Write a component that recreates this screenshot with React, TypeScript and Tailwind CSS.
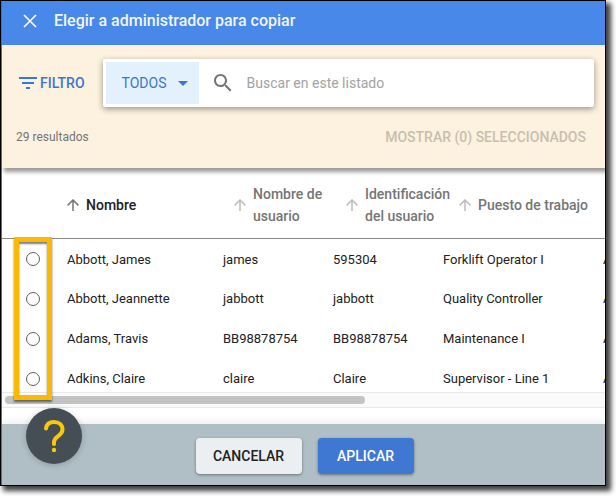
import { useState } from 'react';

interface Admin {
  name: string;
  username: string;
  userId: string;
  job: string;
  extra: string;
}

const admins: Admin[] = [
  { name: 'Abbott, James', username: 'james', userId: '595304', job: 'Forklift Operator I', extra: 'A' },
  { name: 'Abbott, Jeannette', username: 'jabbott', userId: 'jabbott', job: 'Quality Controller', extra: 'A' },
  { name: 'Adams, Travis', username: 'BB98878754', userId: 'BB98878754', job: 'Maintenance I', extra: 'A' },
  { name: 'Adkins, Claire', username: 'claire', userId: 'Claire', job: 'Supervisor - Line 1', extra: 'A' },
];

const CloseIcon = () => (
  <svg width="14" height="14" viewBox="0 0 14 14" fill="none" stroke="#fff" strokeWidth="1.6">
    <path d="M1 1 13 13M13 1 1 13" />
  </svg>
);

const FilterIcon = () => (
  <svg width="18" height="12" viewBox="0 0 18 12" fill="#3c76d2">
    <path d="M0 0h18v2H0zM3 5h12v2H3zM7 10h4v2H7z" />
  </svg>
);

const SearchIcon = () => (
  <svg width="24" height="24" viewBox="0 0 24 24" fill="#757575">
    <path d="M15.5 14h-.79l-.28-.27C15.41 12.59 16 11.11 16 9.5 16 5.91 13.09 3 9.5 3S3 5.91 3 9.5 5.91 16 9.5 16c1.61 0 3.09-.59 4.23-1.57l.27.28v.79l5 4.99L20.49 19l-4.99-5zm-6 0C7.01 14 5 11.99 5 9.5S7.01 5 9.5 5 14 7.01 14 9.5 11.99 14 9.5 14z" />
  </svg>
);

const SortArrow = ({ active }: { active?: boolean }) => (
  <svg
    className="shrink-0"
    width="12"
    height="12"
    viewBox="0 0 12 12"
    fill="none"
    stroke={active ? '#757575' : '#bdbdbd'}
    strokeWidth="1.5"
  >
    <path d="M6 12V1.2M.6 6.4 6 1l5.4 5.4" />
  </svg>
);

const HeaderCell = ({ label, active }: { label: string; active?: boolean }) => (
  <button
    type="button"
    className={`flex items-center gap-[7px] pt-1 text-left text-sm leading-[22px] font-medium ${
      active ? 'text-[#212121]' : 'text-[#757575]'
    }`}
  >
    <SortArrow active={active} />
    <span>{label}</span>
  </button>
);

export default function App() {
  const [selected, setSelected] = useState('');

  return (
    <div className="bg-white pr-2.5 pb-2.5 font-[Roboto,sans-serif]">
      <main className="border border-black bg-white shadow-[4px_4px_5px_1px_rgba(0,0,0,0.75)]">
        <div className="relative flex flex-col overflow-hidden border-l border-[#9a6420]">
          <header className="flex h-11 items-center gap-[17px] bg-[#4788e8] pb-1 pl-[21px] text-[#f1f6fe]">
            <button type="button" aria-label="Cerrar">
              <CloseIcon />
            </button>
            <h1 className="text-base font-medium">Elegir a administrador para copiar</h1>
          </header>

          <section className="bg-[#fcf2df] pt-3.5 pr-[11px] pb-[21px] pl-3.5 shadow-[2px_4px_4px_rgba(0,0,0,0.4)]">
            <div className="flex items-center gap-[18px]">
              <button type="button" className="flex items-center gap-[3px] pl-[3px] text-sm font-medium text-[#3c76d2]">
                <FilterIcon />
                FILTRO
              </button>
              <div className="flex h-12 flex-1 items-center rounded-xs bg-white p-[3px] shadow-[0_2px_6px_rgba(0,0,0,0.4)]">
                <button
                  type="button"
                  className="flex h-full w-[93px] items-center justify-between bg-[#e3f1fd] pr-[11px] pl-4 text-sm text-[#3c76d2]"
                >
                  TODOS
                  <svg width="10" height="5" viewBox="0 0 10 5" fill="#3c76d2">
                    <path d="M0 0h10L5 5z" />
                  </svg>
                </button>
                <label htmlFor="search" className="ml-3" aria-label="Buscar">
                  <SearchIcon />
                </label>
                <input
                  id="search"
                  type="text"
                  placeholder="Buscar en este listado"
                  className="ml-3 min-w-0 flex-1 text-sm outline-none placeholder:text-[#a3a3a3]"
                />
              </div>
            </div>
            <div className="mt-5 flex items-center justify-between pr-2">
              <p className="text-xs text-[#757575]">29 resultados</p>
              <button type="button" disabled className="text-sm font-medium text-[#c8bfb0]">
                MOSTRAR (0) SELECCIONADOS
              </button>
            </div>
          </section>

          <div className="overflow-hidden">
            <table className="w-full table-fixed border-collapse">
              <thead>
                <tr className="h-[70px] border-b border-[#8a8a8a]">
                  <th className="w-[65px]" aria-label="Seleccionar" />
                  <th className="p-0">
                    <HeaderCell label="Nombre" active />
                  </th>
                  <th className="w-[110px] py-0 pr-0 pl-[11px]">
                    <HeaderCell label="Nombre de usuario" />
                  </th>
                  <th className="w-[110px] py-0 pr-0 pl-[13px]">
                    <HeaderCell label="Identificación del usuario" />
                  </th>
                  <th className="w-[160px] py-0 pr-0 pl-4 whitespace-nowrap">
                    <HeaderCell label="Puesto de trabajo" />
                  </th>
                  <th className="w-0.5 p-0" />
                </tr>
              </thead>
              <tbody>
                {admins.map((admin) => (
                  <tr key={admin.name} className="h-10 text-[13px] whitespace-nowrap text-[#212121]">
                    <td className="pt-0.5 pr-0 pb-0 pl-6">
                      <input
                        id={admin.name}
                        type="radio"
                        name="admin"
                        checked={selected === admin.name}
                        onChange={() => setSelected(admin.name)}
                        className="block size-3.5 appearance-none rounded-full border border-[#616161] bg-white checked:border-4"
                      />
                    </td>
                    <td className="p-0 pt-0.5">
                      <label htmlFor={admin.name}>{admin.name}</label>
                    </td>
                    <td className="p-0 pt-0.5">{admin.username}</td>
                    <td className="p-0 pt-0.5">{admin.userId}</td>
                    <td className="p-0 pt-0.5">{admin.job}</td>
                    <td className="overflow-hidden p-0 pt-0.5">{admin.extra}</td>
                  </tr>
                ))}
              </tbody>
            </table>
          </div>

          <div className="-mt-1.5 border-y border-[#e8e8e8] bg-[#fafafa] py-[3px] pl-[3px]">
            <div className="h-2 w-3/5 rounded-full bg-[#c2c2c2]" />
          </div>

          <footer className="mt-4 flex justify-center gap-4 bg-[#b0bec5] pt-3.5 pb-[11px] pl-0.5 shadow-[0_-2px_8px_rgba(0,0,0,0.08)]">
            <button
              type="button"
              className="h-9 w-[106px] rounded bg-[#eceff1] text-sm font-medium text-[#212121] shadow-[0_1px_3px_rgba(0,0,0,0.4)]"
            >
              CANCELAR
            </button>
            <button
              type="button"
              className="h-9 w-24 rounded bg-[#3f78d3] text-sm font-medium text-white shadow-[0_1px_3px_rgba(0,0,0,0.4)]"
            >
              APLICAR
            </button>
          </footer>

          {/* highlight around the radio column */}
          <div className="pointer-events-none absolute top-[236px] left-3 h-[163px] w-[38px] border-5 border-[#fbb901] shadow-[0_2px_2px_rgba(0,0,0,0.5),inset_0_2px_2px_rgba(0,0,0,0.5)]" />

          <button
            type="button"
            aria-label="Ayuda"
            className="absolute bottom-[21px] left-6 flex size-14 items-center justify-center rounded-full bg-[#464e55] shadow-[0_1px_6px_rgba(0,0,0,0.2)]"
          >
            <svg width="22" height="34" viewBox="0 0 22 34" fill="none" stroke="#f8c80c" strokeWidth="4" strokeLinecap="round">
              <path d="M3 9.5C3.500 5.500 6.500 3 11 3c5 0 8.500 3 8.500 7.500 0 6.500-8.500 6.500-8.500 12.500v2" />
              <circle cx="11" cy="31" r="2.2" fill="#f8c80c" stroke="none" />
            </svg>
          </button>
        </div>
      </main>
    </div>
  );
}
